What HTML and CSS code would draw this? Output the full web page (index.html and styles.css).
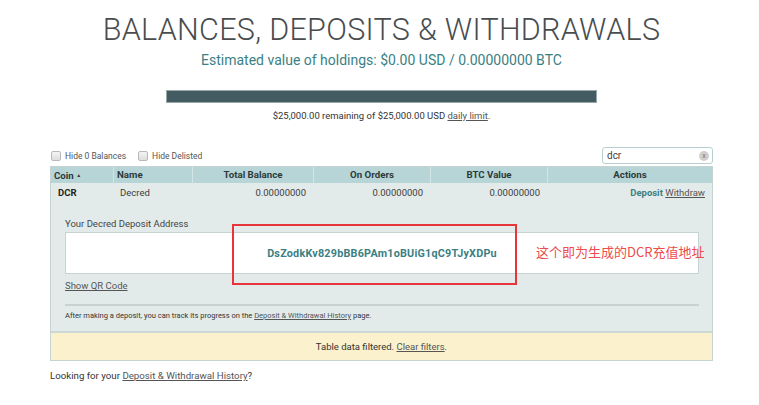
FILE: index.html
```html
<!DOCTYPE html>
<html lang="en">
<head>
  <meta charset="UTF-8">
  <title>Balances, Deposits &amp; Withdrawals</title>
  <link rel="stylesheet" href="styles.css">
</head>
<body>
  <div class="page">
    <h1 class="title">BALANCES, DEPOSITS &amp; WITHDRAWALS</h1>
    <p class="holdings">Estimated value of holdings: $0.00 USD / 0.00000000 BTC</p>
    <div class="limit-bar"><div class="limit-fill"></div></div>
    <p class="limit-text">$25,000.00 remaining of $25,000.00 USD <a href="#">daily limit</a>.</p>

    <div class="toolbar">
      <label class="check"><span class="box"></span>Hide 0 Balances</label>
      <label class="check"><span class="box"></span>Hide Delisted</label>
      <div class="search">
        <span class="search-value">dcr</span>
        <span class="search-clear">x</span>
      </div>
    </div>

    <div class="balances">
      <div class="cols thead">
        <div class="cell">Coin <span class="sort">&#9650;</span></div>
        <div class="cell">Name</div>
        <div class="cell center">Total Balance</div>
        <div class="cell center">On Orders</div>
        <div class="cell center">BTC Value</div>
        <div class="cell center">Actions</div>
      </div>
      <div class="cols trow">
        <div class="cell coin">DCR</div>
        <div class="cell">Decred</div>
        <div class="cell num">0.00000000</div>
        <div class="cell num">0.00000000</div>
        <div class="cell num">0.00000000</div>
        <div class="cell num actions"><a class="deposit-link" href="#">Deposit</a> <a href="#">Withdraw</a></div>
      </div>
      <div class="deposit">
        <div class="deposit-label">Your Decred Deposit Address</div>
        <div class="address">DsZodkKv829bBB6PAm1oBUiG1qC9TJyXDPu</div>
        <a class="qr-link" href="#">Show QR Code</a>
        <hr>
        <p class="deposit-note">After making a deposit, you can track its progress on the <a href="#">Deposit &amp; Withdrawal History</a> page.</p>
        <div class="annot-box"></div>
        <div class="annot-text">这个即为生成的DCR充值地址</div>
      </div>
      <div class="filtered">Table data filtered. <a href="#">Clear filters</a>.</div>
    </div>

    <p class="history">Looking for your <a href="#">Deposit &amp; Withdrawal History</a>?</p>
  </div>
</body>
</html>
```

FILE: styles.css
```css
:root {
  --text: #3c3c3c;
  --teal: #3b7f84;
  --head-bg: #b7d5d6;
  --row-bg: #e3ebea;
  --line: #c6d3d3;
  --note-bg: #fbf1cc;
  --red: #e8353b;
}
body {
  background: #fff;
  color: var(--text);
  font-family: Roboto, "Liberation Sans", sans-serif;
  margin: 0;
}
a {
  color: #555;
  text-decoration: underline;
}
.page {
  padding: 7px 46px 0 50px;
}
.title {
  font-size: 30.5px;
  font-weight: 300;
  color: #4a4d4f;
  text-align: center;
  letter-spacing: 0.01em;
  margin: 5px 0 0 0;
  line-height: 36px;
}
.holdings {
  color: var(--teal);
  font-size: 14px;
  text-align: center;
  margin: 3px 0 0 0;
  line-height: 18px;
}
.limit-bar {
  width: 431px;
  height: 13px;
  box-sizing: border-box;
  margin: 21px auto 0 116px;
  border: 1px solid #95a9ab;
  background: #d6dfe0;
}
.limit-fill {
  height: 100%;
  background: #445b61;
}
.limit-text {
  font-size: 9.5px;
  text-align: center;
  margin: 7px 0 0 0;
  line-height: 12px;
  color: #333;
}
.toolbar {
  display: flex;
  align-items: center;
  gap: 12px;
  margin-top: 24px;
  height: 19px;
  padding-left: 1px;
}
.check {
  display: flex;
  align-items: center;
  gap: 4px;
  font-size: 8.5px;
  color: #555;
}
.box {
  width: 8px;
  height: 8px;
  border: 1px solid #b9b9b9;
  border-radius: 2px;
  background: linear-gradient(#f4f4f4, #ddd);
}
.search {
  margin-left: auto;
  width: 111px;
  height: 17px;
  box-sizing: border-box;
  border: 1px solid #b8cfcf;
  border-radius: 3px;
  display: flex;
  align-items: center;
  justify-content: space-between;
  padding: 0 3px 0 4px;
  font-size: 10px;
  color: #444;
}
.search-clear {
  width: 10px;
  height: 10px;
  border-radius: 50%;
  background: #cfcfcf;
  color: #777;
  font-size: 7px;
  line-height: 10px;
  text-align: center;
}
.balances {
  width: 663px;
  box-sizing: border-box;
  border: 1px solid var(--line);
  margin-top: 1px;
}
.cols {
  display: grid;
  grid-template-columns: 62px 79px 121px 117px 117px 1fr;
}
.thead {
  background: var(--head-bg);
  font-size: 9.7px;
  font-weight: 700;
  color: #2c3a3c;
  height: 16px;
  line-height: 16px;
}
.thead .cell {
  border-left: 1px solid #d3e6e6;
  padding: 0 3px;
}
.thead .cell:first-child {
  border-left: none;
}
.sort {
  font-size: 5px;
  vertical-align: 2px;
}
.center {
  text-align: center;
}
.trow {
  background: var(--row-bg);
  font-size: 9.5px;
  height: 20px;
  line-height: 20px;
}
.trow .cell {
  padding: 0 7px;
}
.coin {
  font-weight: 700;
  color: #222;
}
.num {
  text-align: right;
}
.actions a {
  font-size: 9.5px;
}
.actions .deposit-link {
  color: var(--teal);
  font-weight: 700;
  text-decoration: none;
}
.deposit {
  position: relative;
  background: var(--row-bg);
  padding: 15px 13px 11px 14px;
}
.deposit-label {
  font-size: 9.5px;
  color: #444;
  line-height: 12px;
}
.address {
  margin-top: 2px;
  background: #fff;
  border: 1px solid var(--line);
  height: 42px;
  box-sizing: border-box;
  display: flex;
  align-items: center;
  justify-content: center;
  color: var(--teal);
  font-weight: 700;
  font-size: 10.8px;
  letter-spacing: 0.02em;
}
.qr-link {
  display: inline-block;
  font-size: 9.5px;
  margin-top: 0;
  line-height: 11px;
}
.deposit hr {
  border: none;
  border-top: 2px solid #c9d2d2;
  margin: 11px 0 0 0;
}
.deposit-note {
  font-size: 7.5px;
  color: #333;
  margin: 5px 0 0 0;
  line-height: 9px;
}
.annot-box {
  position: absolute;
  left: 181px;
  top: 21px;
  width: 285px;
  height: 61px;
  box-sizing: border-box;
  border: 2px solid var(--red);
}
.annot-text {
  position: absolute;
  left: 485px;
  top: 40px;
  font-family: "Noto Sans CJK SC", sans-serif;
  font-size: 13px;
  line-height: 18px;
  color: #ee4b4b;
  white-space: nowrap;
}
.filtered {
  background: var(--note-bg);
  border-top: 2px solid #cdd8d6;
  height: 27px;
  line-height: 27px;
  text-align: center;
  font-size: 9.5px;
  color: #333;
}
.history {
  font-size: 9.7px;
  color: #333;
  margin: 9px 0 0 0;
}
```
